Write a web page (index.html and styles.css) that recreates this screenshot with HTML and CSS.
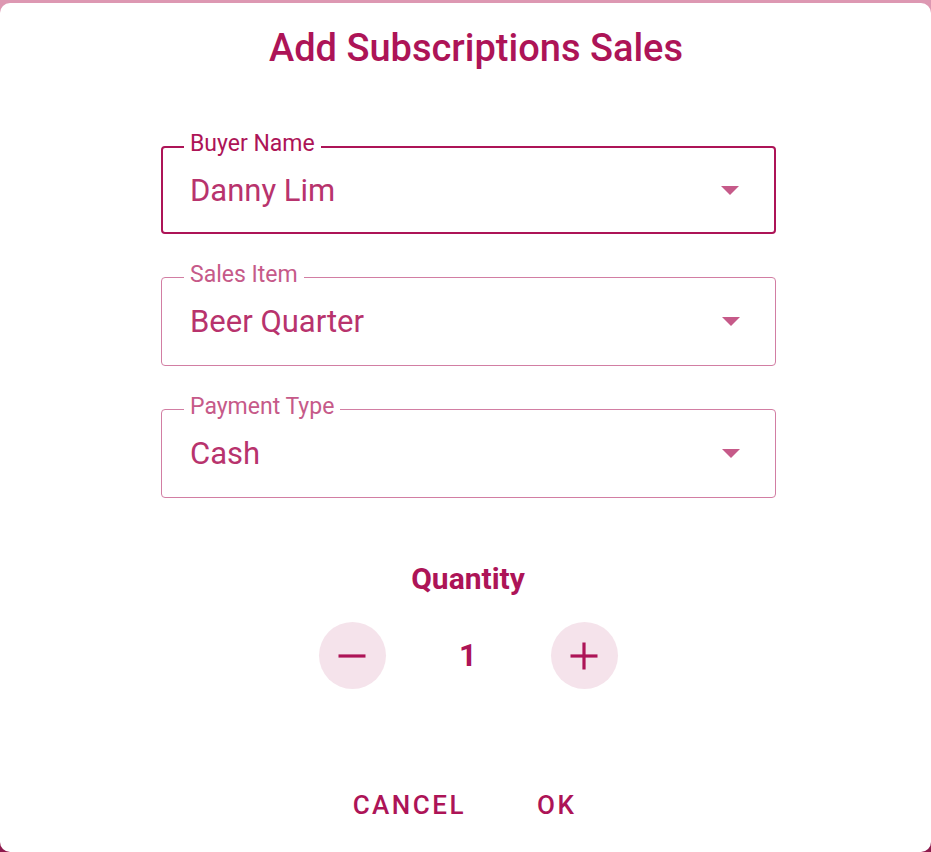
FILE: index.html
```html
<!DOCTYPE html>
<html lang="en">
<head>
<meta charset="utf-8">
<title>Add Subscriptions Sales</title>
<link rel="stylesheet" href="styles.css">
</head>
<body>
<div class="dialog">
  <h1 class="title">Add Subscriptions Sales</h1>
  <div class="fields">
    <div class="field focused">
      <span class="label">Buyer Name</span>
      <span class="value">Danny Lim</span>
      <span class="arrow"></span>
    </div>
    <div class="field">
      <span class="label">Sales Item</span>
      <span class="value">Beer Quarter</span>
      <span class="arrow"></span>
    </div>
    <div class="field">
      <span class="label">Payment Type</span>
      <span class="value">Cash</span>
      <span class="arrow"></span>
    </div>
  </div>
  <div class="quantity">
    <div class="qty-title">Quantity</div>
    <div class="counter">
      <button class="round">
        <svg width="30" height="30" viewBox="0 0 30 30"><line x1="1.5" y1="15" x2="28.5" y2="15" stroke="#ad1457" stroke-width="3.2"/></svg>
      </button>
      <span class="count">1</span>
      <button class="round">
        <svg width="30" height="30" viewBox="0 0 30 30"><line x1="1.5" y1="15" x2="28.5" y2="15" stroke="#ad1457" stroke-width="3.2"/><line x1="15" y1="1.5" x2="15" y2="28.5" stroke="#ad1457" stroke-width="3.2"/></svg>
      </button>
    </div>
  </div>
  <div class="actions">
    <button class="action">CANCEL</button>
    <button class="action">OK</button>
  </div>
</div>
</body>
</html>
```
FILE: styles.css
```css
html, body {
  margin: 0;
  padding: 0;
  height: 100%;
}
body {
  background: linear-gradient(to bottom, #dd98b2 0, #dd98b2 50%, #8e1a4d 50%, #8e1a4d 100%);
  font-family: Roboto, "Liberation Sans", sans-serif;
  overflow: hidden;
}
.dialog {
  margin-top: 3px;
  height: 849px;
  box-sizing: border-box;
  background: #fff;
  border-radius: 10px;
  display: flex;
  flex-direction: column;
  padding-top: 23px;
}
.title {
  margin: 0;
  font-size: 38px;
  font-weight: 500;
  line-height: 45px;
  color: #ad1457;
  text-align: center;
  padding-left: 21px;
}
.fields {
  margin: 75px 0 0 161px;
  width: 615px;
  display: flex;
  flex-direction: column;
  gap: 43px;
}
.field {
  position: relative;
  box-sizing: border-box;
  height: 89px;
  border: 1px solid #d27ea3;
  border-radius: 4px;
  display: flex;
  align-items: center;
  padding: 0 35px 0 28px;
}
.field.focused {
  border: 2px solid #ad1457;
  height: 88px;
  padding-left: 27px;
}
.label {
  position: absolute;
  top: -16px;
  left: 22px;
  padding: 0 6px;
  background: #fff;
  font-size: 23px;
  line-height: 26px;
  color: #c65a89;
}
.focused .label {
  top: -17px;
  left: 21px;
  color: #ad1457;
}
.value {
  flex: 1;
  font-size: 31px;
  color: #b8336d;
}
.arrow {
  width: 0;
  height: 0;
  border-left: 9px solid transparent;
  border-right: 9px solid transparent;
  border-top: 9px solid #c65a89;
}
.quantity {
  margin-top: 63px;
  display: flex;
  flex-direction: column;
  align-items: center;
  padding-left: 5px;
}
.qty-title {
  font-size: 30px;
  font-weight: 700;
  line-height: 35px;
  color: #ad1457;
}
.counter {
  margin-top: 26px;
  display: flex;
  align-items: center;
}
.round {
  width: 67px;
  height: 67px;
  border-radius: 50%;
  border: none;
  background: #f5e3eb;
  padding: 0;
  display: flex;
  align-items: center;
  justify-content: center;
}
.count {
  width: 165px;
  text-align: center;
  font-size: 31px;
  font-weight: 700;
  color: #ad1457;
}
.actions {
  margin-top: 101px;
  display: flex;
  justify-content: center;
  gap: 47px;
  padding-right: 2px;
}
.action {
  border: none;
  background: none;
  padding: 0 12px;
  font-family: Roboto, "Liberation Sans", sans-serif;
  font-size: 26px;
  line-height: 30px;
  font-weight: 500;
  letter-spacing: 2.5px;
  color: #ad1457;
}
```
